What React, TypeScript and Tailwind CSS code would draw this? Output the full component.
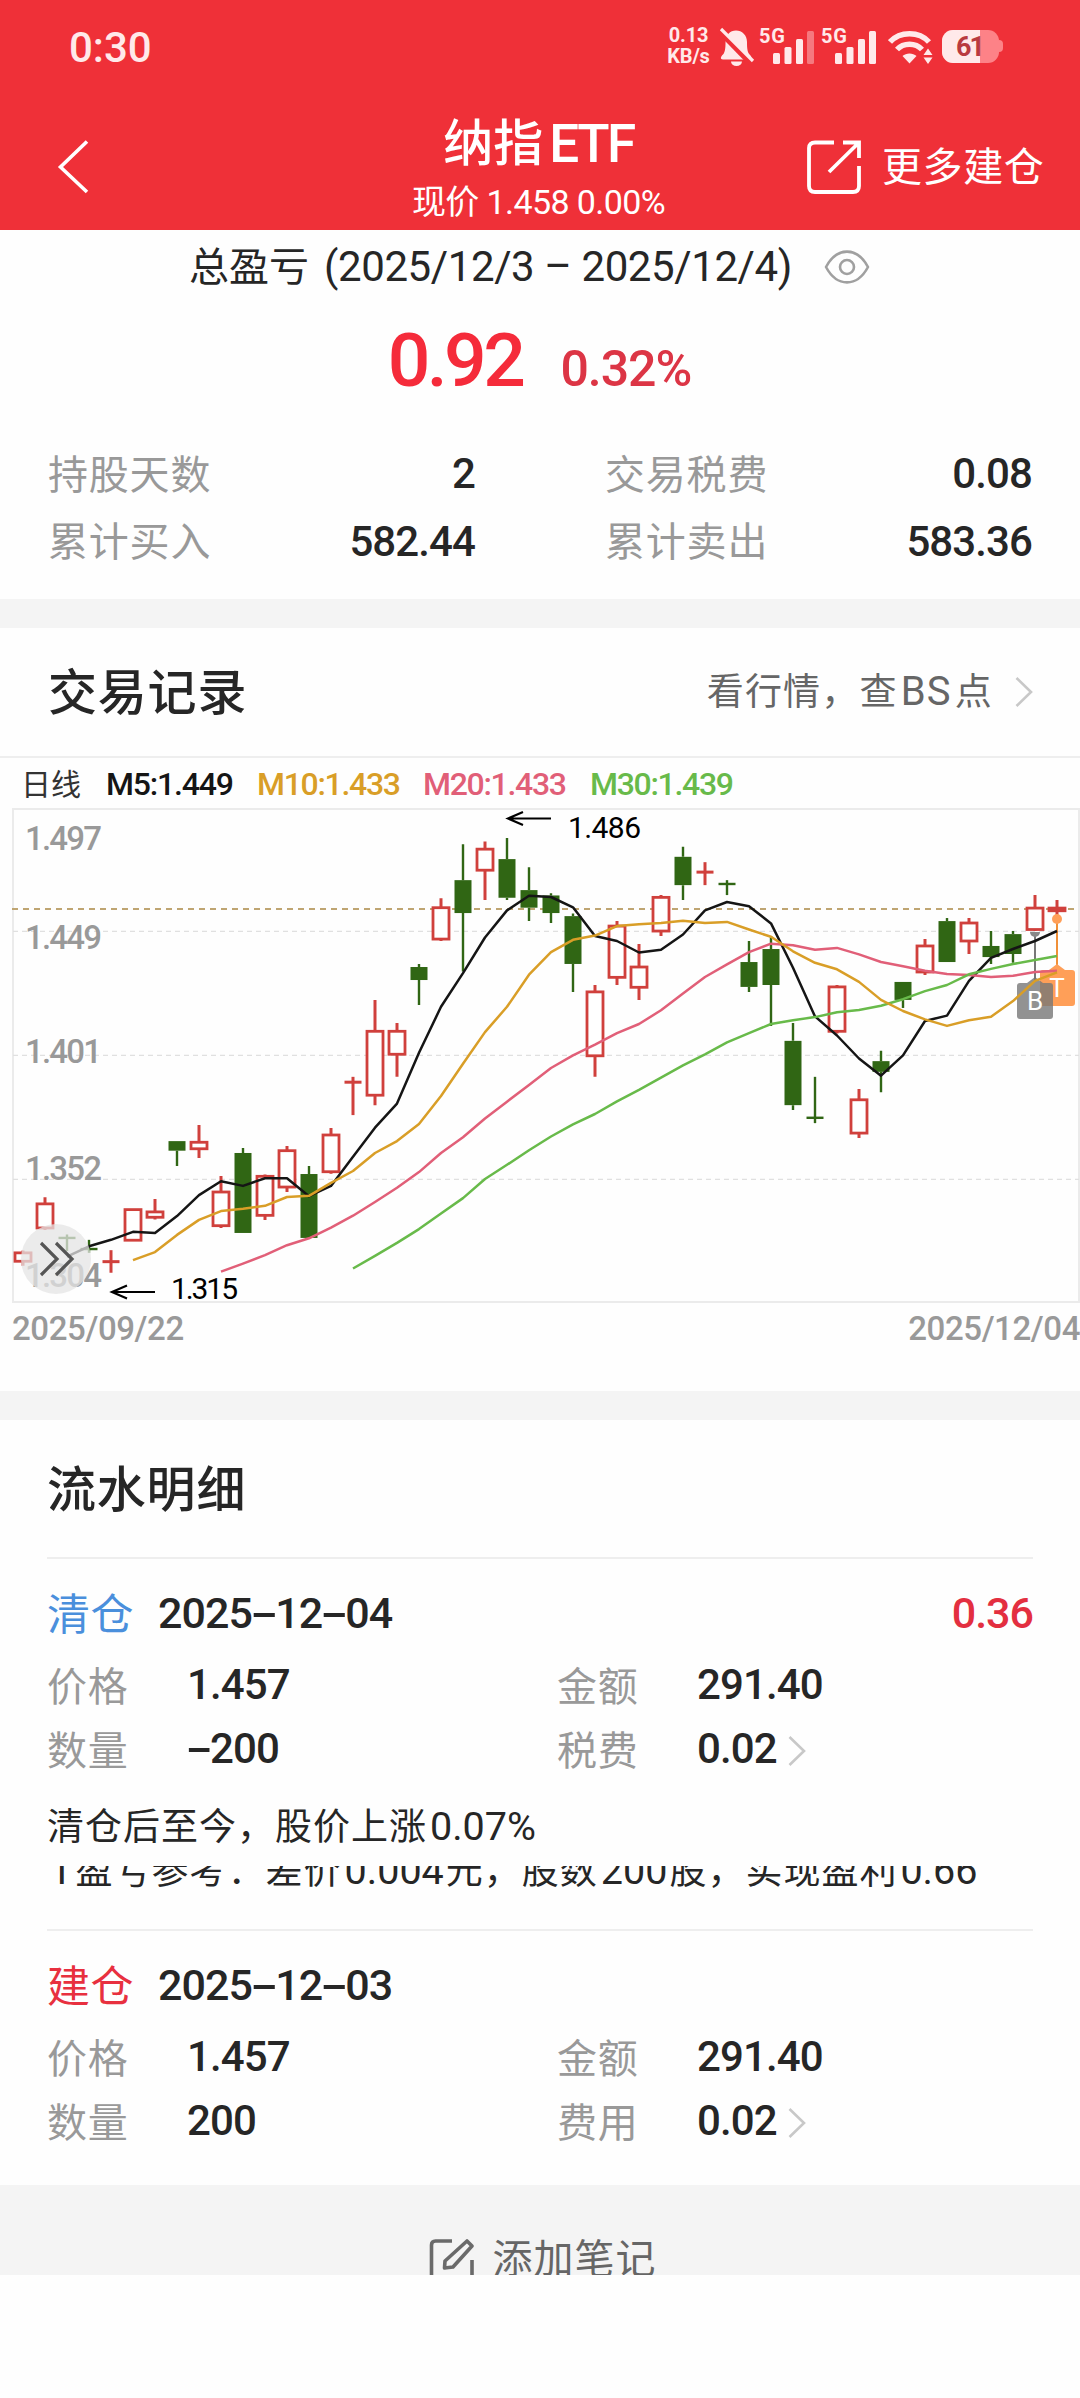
import React from 'react';

type Candle = [up: boolean, high: number, top: number, bottom: number, low: number];

const CHART_TOP = 48;
const CHART_UNIT = 0.38265;
const BLACK = '#151515';
const RED = '#d0403c';
const GREEN = '#306614';

const CANDLES: Candle[] = [
  [true, 1282, 1288, 1310, 1322],
  [true, 1143, 1160, 1223, 1228],
  [false, 1240, 1249, 1249, 1283],
  [false, 1254, 1278, 1278, 1288],
  [true, 1281, 1311, 1311, 1340],
  [true, 1175, 1175, 1255, 1255],
  [true, 1147, 1181, 1195, 1201],
  [false, 996, 996, 1021, 1061],
  [true, 954, 999, 1016, 1040],
  [true, 1087, 1129, 1217, 1223],
  [false, 1014, 1027, 1236, 1236],
  [true, 1083, 1088, 1190, 1202],
  [true, 1009, 1021, 1116, 1129],
  [false, 1061, 1082, 1249, 1249],
  [true, 962, 980, 1076, 1081],
  [true, 828, 842, 842, 928],
  [true, 627, 709, 876, 902],
  [true, 687, 709, 769, 828],
  [false, 533, 541, 575, 640],
  [true, 361, 386, 468, 473],
  [false, 220, 314, 400, 553],
  [true, 213, 233, 288, 366],
  [false, 204, 259, 360, 366],
  [false, 280, 340, 386, 421],
  [false, 348, 354, 400, 426],
  [false, 401, 408, 533, 606],
  [true, 588, 606, 773, 828],
  [true, 421, 434, 568, 588],
  [true, 481, 541, 594, 627],
  [true, 353, 359, 447, 460],
  [false, 227, 253, 327, 366],
  [true, 267, 293, 293, 327],
  [false, 314, 324, 324, 353],
  [false, 473, 528, 593, 606],
  [false, 460, 494, 588, 695],
  [false, 687, 734, 902, 915],
  [false, 828, 935, 935, 949],
  [true, 588, 593, 709, 715],
  [true, 860, 888, 975, 988],
  [false, 760, 787, 815, 868],
  [false, 580, 580, 627, 648],
  [true, 468, 486, 554, 562],
  [false, 413, 421, 528, 528],
  [true, 413, 426, 473, 507],
  [false, 447, 486, 515, 533],
  [false, 447, 455, 507, 530],
  [true, 353, 387, 443, 447],
  [true, 366, 387, 394, 413],
];

const M5 = [
  1298, 1271, 1254, 1233, 1236, 1192, 1137, 1101, 1113, 1093, 1093, 1140, 1113, 1037, 961, 898,
  765, 645, 557, 464, 393, 355, 358, 385, 460, 473, 503, 496, 456, 393, 371, 382, 427, 543, 670,
  720, 780, 825, 772, 682, 668, 577, 517, 494, 473, 447,
];
const M10 = [
  1307, 1286, 1241, 1202, 1179, 1173, 1165, 1142, 1139, 1105, 1074, 1027, 996, 951, 878, 794, 711,
  645, 561, 502, 470, 459, 434, 429, 426, 420, 426, 423, 443, 462, 500, 530, 547, 580, 627, 656,
  678, 695, 680, 671, 630, 577, 555,
];
const M20 = [
  1337, 1316, 1294, 1268, 1250, 1222, 1191, 1155, 1118, 1077, 1027, 986, 937, 893, 849, 805, 772,
  744, 714, 690, 654, 610, 567, 534, 502, 480, 484, 496, 491, 508, 528, 539, 551, 559, 562, 567,
  564, 554, 551,
];
const M30 = [
  1329, 1296, 1262, 1226, 1185, 1145, 1095, 1058, 1020, 984, 952, 925, 892, 862, 830, 798, 769,
  738, 714, 690, 680, 672, 659, 653, 642, 625, 604, 588, 560, 546, 533, 523, 512,
];

const AVERAGES = [
  { color: BLACK, values: M5 },
  { color: '#e15f78', values: M20 },
  { color: '#68ba4a', values: M30 },
  { color: '#d99e27', values: M10 },
];

const PRICE_LABELS: [string, number][] = [
  ['1.497', 42],
  ['1.449', 141],
  ['1.401', 255],
  ['1.352', 372],
  ['1.304', 479],
];

const px = (i: number) => 23 + i * 22;
const py = (v: number) => v * CHART_UNIT - CHART_TOP;

// averages are right-aligned: the last value always belongs to the last candle
const toPoints = (values: number[]) => {
  const start = CANDLES.length - values.length;
  return values.map((v, i) => `${px(start + i)},${py(v).toFixed(1)}`).join(' ');
};

const CandleBar = ({ candle, x }: { candle: Candle; x: number }) => {
  const [up, high, top, bottom, low] = candle;
  const color = up ? RED : GREEN;
  const wick = up ? 3 : 2.4;

  if (top === bottom) {
    return (
      <g stroke={color}>
        <path d={`M${x} ${py(high)}V${py(low)}`} strokeWidth={wick} />
        <path d={`M${x - 8.5} ${py(top)}H${x + 8.5}`} strokeWidth={wick} />
      </g>
    );
  }

  return (
    <g stroke={color}>
      <path d={`M${x} ${py(high)}V${py(top)}M${x} ${py(bottom)}V${py(low)}`} strokeWidth={wick} />
      {up ? (
        <rect x={x - 8} y={py(top)} width={16} height={py(bottom) - py(top)} fill="#fff" strokeWidth={2.8} />
      ) : (
        <rect x={x - 8.5} y={py(top)} width={17} height={py(bottom) - py(top)} fill={color} stroke="none" />
      )}
    </g>
  );
};

const KLineChart = () => (
  <svg width="1080" height="496" viewBox="0 0 1080 496" fill="none" className="block shrink-0 overflow-visible">
    <rect x="13" y="1" width="1066" height="493" stroke="#ebebeb" strokeWidth="2" />
    {[123.4, 247.4, 371.4].map(y => (
      <path key={y} d={`M13 ${y}H1079`} stroke="#e0e0e0" strokeWidth="1.2" strokeDasharray="5 4" />
    ))}
    <path d="M12 101H1075" stroke="#bfa572" strokeWidth="1.8" strokeDasharray="6 5" />

    <g fontSize="33" fontWeight="500" fill="#999">
      {PRICE_LABELS.map(([label, y]) => (
        <text key={label} x="25" y={y} textLength="77">{label}</text>
      ))}
    </g>

    {CANDLES.map((candle, i) => (
      <CandleBar key={i} candle={candle} x={px(i)} />
    ))}

    {/* T marker */}
    <g fill="#ff9f58">
      <path d="M1057 111V160" stroke="#f09038" strokeWidth="2" />
      <circle cx="1057" cy="111" r="5" />
      <path d="M1057 156l8 6h7a3 3 0 0 1 3 3v30a3 3 0 0 1-3 3h-29a3 3 0 0 1-3-3v-30a3 3 0 0 1 3-3h6z" />
    </g>
    {/* B marker */}
    <path d="M1035 124V172" stroke="#777" strokeWidth="2" />
    <path d="M1030 124a5 5 0 0 0 10 0z" fill="#888" />
    <path
      d="M1035 169l8 6h7a3 3 0 0 1 3 3v30a3 3 0 0 1-3 3h-30a3 3 0 0 1-3-3v-30a3 3 0 0 1 3-3h7z"
      fill="#777"
      fillOpacity="0.8"
    />

    {AVERAGES.map(({ color, values }) => (
      <polyline key={color} points={toPoints(values)} stroke={color} strokeWidth="2.5" strokeLinejoin="round" />
    ))}

    <g fontSize="26" fill="#fff" textAnchor="middle">
      <text x="1057" y="189">T</text>
      <text x="1035" y="202">B</text>
    </g>

    {/* highest / lowest price */}
    <g stroke="#000" strokeWidth="2.2">
      <path d="M551 10.5H508M523 4L508 10.5L523 17" />
      <path d="M155 484H112M127 477.5L112 484L127 490.5" />
    </g>
    <g fontSize="30" fill="#000">
      <text x="568" y="30" textLength="73">1.486</text>
      <text x="171" y="491" textLength="67">1.315</text>
    </g>

    <circle cx="56" cy="451" r="35" fill="#e4e4e4" fillOpacity="0.75" />
    <path d="M41 435L57 451L41 467M56 435L72 451L56 467" stroke="#555" strokeWidth="3.2" />
  </svg>
);

const Chevron = ({ className = '' }: { className?: string }) => (
  <svg width="20" height="32" viewBox="0 0 20 32" fill="none" className={className}>
    <path d="M2.5 2L17 16L2.5 30" stroke="#c8c8c8" strokeWidth="2.6" />
  </svg>
);

const Signal = ({ weak = false }: { weak?: boolean }) => (
  <svg width="56" height="40" viewBox="0 0 56 40" fill="#ffe9ea" className="overflow-visible">
    <text x="0" y="17" fontSize="20" fontWeight="700" textLength="26">5G</text>
    <rect x="14" y="27" width="7" height="11" rx="1.5" />
    <rect x="25.5" y="21" width="7" height="17" rx="1.5" />
    <rect x="37" y="13" width="7" height="25" rx="1.5" />
    <rect x="48" y="5" width="7" height="33" rx="1.5" fillOpacity={weak ? 0.4 : 1} />
  </svg>
);

const StatusBar = () => (
  <div className="flex h-[92px] items-center pl-[69px] text-[#ffe9ea]">
    <span className="w-[597px] pt-[3px] text-[42px] font-medium leading-none">0:30</span>
    <div className="w-[45px] text-center text-[20px] font-bold leading-[21px]">
      <div className="tracking-[-0.2px]">0.13</div>
      <div className="tracking-[-0.2px]">KB/s</div>
    </div>
    <svg width="36" height="40" viewBox="0 0 36 40" className="ml-[8px]">
      <path
        d="M4 33.5C1 33.5 1.500 30.5 4 28.500C6 26.500 6.500 22 6.500 17C6.500 9 11 4.500 17 4.500C23 4.500 28 9 28 16C28 23 28.500 26.500 31 29C33 31 33 33.500 30 33.500Z"
        fill="#ffe9ea"
      />
      <path d="M12 35.500h11a5.500 4.500 0 0 1-11 0z" fill="#ffe9ea" />
      <path d="M-2 3L31 37" stroke="#ef3038" strokeWidth="5" />
      <path d="M2 3L34 35" stroke="#ffe9ea" strokeWidth="3.2" />
    </svg>
    <div className="ml-[4px] flex gap-[6px]">
      <Signal weak />
      <Signal />
    </div>
    <svg width="46" height="40" viewBox="0 0 46 40" fill="none" className="ml-[11px]">
      <path d="M2 16C12 5 31 5 41 16" stroke="#ffe9ea" strokeWidth="5.500" />
      <path d="M9 23.500C15.500 16.500 27.500 16.500 34 23.500" stroke="#ffe9ea" strokeWidth="5.500" />
      <path d="M14.500 30C18 26.500 25 26.500 28.500 30L21.500 37.500z" fill="#ffe9ea" />
      <path d="M35.500 29L40 22.500L44.500 29zM35.500 31.500L40 38L44.500 31.500z" fill="#ffe9ea" />
    </svg>
    <div className="relative ml-[8px] h-[33px] w-[57px] overflow-hidden rounded-[11px] bg-[#fd8287]">
      <div className="h-full w-[38px] bg-[#ffe9ea]" />
      <span className="absolute left-[14px] top-0 text-[27px] font-bold leading-[34px] tracking-[-2px] text-[#b93a3f]">61</span>
    </div>
    <div className="h-[12px] w-[4px] rounded-r-full bg-[#fd8287]" />
  </div>
);

const Header = () => (
  <header className="h-[230px] bg-[#ef3038] text-white">
    <StatusBar />
    <div className="flex h-[138px] items-start">
      <svg width="34" height="56" viewBox="0 0 34 56" fill="none" className="ml-[56px] mt-[47px]">
        <path d="M31 2.500L4.500 28L31 53" stroke="#fff" strokeWidth="3.600" />
      </svg>
      <div className="ml-[262px] w-[378px] pr-[5px] text-center">
        <div className="mt-[24px] flex justify-center text-[50px] font-medium leading-[56px]">
          纳指<span className="ml-1.5 text-[53px] tracking-[-2.500px]">ETF</span>
        </div>
        <div className="mt-[10px] text-[34px] leading-[40px] tracking-[-0.6px]">
          现价 1.458 0.00%
        </div>
      </div>
      <svg width="54" height="54" viewBox="0 0 54 54" fill="none" className="ml-[77px] mt-[48px]">
        <path d="M27 2.500H8Q2 2.500 2 8V46Q2 52 8 52H46Q52 52 52 46V26" stroke="#fff" strokeWidth="3.800" />
        <path d="M36 2.500H52V18M51.500 3L22 32" stroke="#fff" strokeWidth="3.800" />
      </svg>
      <span className="ml-[21px] mt-[50px] whitespace-nowrap text-[40px] leading-[52px] tracking-[0.6px]">更多建仓</span>
    </div>
  </header>
);

const Stat = ({ label, value }: { label: string; value: string }) => (
  <div className="flex h-[67.500px] w-[427px] items-center justify-between">
    <span className="pt-[8px] text-[40px] leading-none tracking-[0.8px] text-[#999]">{label}</span>
    <span className="pt-[5px] text-[42px] font-medium leading-none tracking-[-0.9px]">{value}</span>
  </div>
);

const Summary = () => (
  <section className="h-[369px]">
    <div className="flex h-[74px] items-center pl-[189px]">
      <span className="whitespace-nowrap text-[40px] leading-none">
        总盈亏<span className="ml-[15px] text-[42px] tracking-[-0.400px]">(2025/12/3 – 2025/12/4)</span>
      </span>
      <svg width="46" height="36" viewBox="0 0 46 36" fill="none" className="ml-[32px]" stroke="#a0a0a0" strokeWidth="2.600">
        <path d="M2 18C13 -2.500 33 -2.500 44 18C33 38.500 13 38.500 2 18Z" strokeLinejoin="round" />
        <circle cx="23" cy="18" r="7" />
      </svg>
    </div>
    <div className="mt-[14px] flex h-[84px] items-baseline justify-center pr-[1px] text-[#f52b3a]">
      <span className="text-[75px] font-medium leading-[84px] tracking-[-3.500px]">0.92</span>
      <span className="ml-[38px] text-[50px] leading-none font-medium tracking-[-1px] text-[#dc3545]">0.32%</span>
    </div>
    <div className="mt-[36px] flex flex-wrap justify-between pl-[48px] pr-[48px]">
      <Stat label="持股天数" value="2" />
      <Stat label="交易税费" value="0.08" />
      <Stat label="累计买入" value="582.44" />
      <Stat label="累计卖出" value="583.36" />
    </div>
  </section>
);

const Records = () => (
  <section className="h-[763px]">
    <div className="flex h-[128px] items-center justify-between pl-[48px] pr-[46px]">
      <h2 className="pt-[3px] text-[49px] font-medium leading-none tracking-[0.8px]">交易记录</h2>
      <div className="flex items-center text-[#666]">
        <span className="text-[37px] leading-none tracking-[1.200px]">
          看行情，查<span className="mx-[3px] text-[40px]">BS</span>点
        </span>
        <Chevron className="ml-[21px]" />
      </div>
    </div>
    <div className="flex h-[52px] items-center border-t-2 border-[#eee] pl-[21px] pt-[2px] text-[32px] font-medium">
      <span className="w-[85px] text-[30px] font-normal text-[#333]">日线</span>
      <span className="w-[151px] tracking-[-1.200px] text-[#151515]">M5:1.449</span>
      <span className="w-[166px] tracking-[-1.300px] text-[#d99e27]">M10:1.433</span>
      <span className="w-[167px] tracking-[-1.300px] text-[#e15f78]">M20:1.433</span>
      <span className="tracking-[-1.300px] text-[#68ba4a]">M30:1.439</span>
    </div>
    <KLineChart />
    <div className="flex h-[50px] items-center justify-between pl-[12px] text-[33px] font-medium text-[#999]">
      <span className="tracking-[-0.400px]">2025/09/22</span>
      <span className="tracking-[-0.400px]">2025/12/04</span>
    </div>
  </section>
);

// digits stay narrow while the dash is drawn as wide as a numeral
const Dashed = ({ text }: { text: string }) => (
  <>
    {text.split(/(-)/).map((part, i) =>
      part === '-' ? (
        <span key={i} className="inline-block w-[23px] origin-center scale-x-[1.900] text-center">-</span>
      ) : (
        part
      )
    )}
  </>
);

// latin runs inside Chinese sentences are a bit larger and get some air
const Mixed = ({ text }: { text: string }) => (
  <>
    {text.split(/([\w.%]+)/).map((part, i) =>
      i % 2 === 1 ? (
        <span key={i} className="ml-[3px] mr-[2px] text-[39.500px] tracking-[0px]">{part}</span>
      ) : (
        part
      )
    )}
  </>
);

interface TradeProps {
  kind: string;
  kindClass: string;
  date: string;
  profit?: string;
  quantity: string;
  feeLabel: string;
}

const Field = ({ label, value, arrow = false }: { label: string; value: string; arrow?: boolean }) => (
  <div className="flex h-[64px] w-[510px] items-center">
    <span className="w-[140px] pt-[5px] text-[40px] leading-none tracking-[0.8px] text-[#999]">{label}</span>
    <span className="text-[42px] font-medium leading-none tracking-[-0.9px]"><Dashed text={value} /></span>
    {arrow && <Chevron className="ml-[10px] mt-[3px]" />}
  </div>
);

const Trade = ({ kind, kindClass, date, profit, quantity, feeLabel }: TradeProps) => (
  <div className="border-t-2 border-[#eee] pt-[16px]">
    <div className="flex h-[76px] items-center text-[43px] font-medium leading-none">
      <span className={`w-[111px] pt-[5px] font-normal tracking-[0.500px] ${kindClass}`}>{kind}</span>
      <span className="tracking-[-0.9px]"><Dashed text={date} /></span>
      {profit && <span className="ml-auto tracking-[-1px] text-[#e32f40]">{profit}</span>}
    </div>
    <div className="mt-[2px] flex flex-wrap">
      <Field label="价格" value="1.457" />
      <div className="w-[476px]"><Field label="金额" value="291.40" /></div>
      <Field label="数量" value={quantity} />
      <div className="w-[476px]"><Field label={feeLabel} value="0.02" arrow /></div>
    </div>
  </div>
);

const Details = () => (
  <section className="h-[765px] px-[47px]">
    <h2 className="flex h-[137px] items-center pt-[4px] text-[49px] font-medium leading-none tracking-[0.8px]">流水明细</h2>
    <div className="h-[372px]">
      <Trade
        kind="清仓"
        kindClass="text-[#4a8fdc]"
        date="2025-12-04"
        profit="0.36"
        quantity="-200"
        feeLabel="税费"
      />
      <div className="mt-[2px] h-[83px] whitespace-nowrap pt-[21px] text-[37px] leading-[46px] tracking-[1px]">
        <Mixed text="清仓后至今，股价上涨0.07%" />
      </div>
      <div className="flex h-[30px] items-end overflow-hidden whitespace-nowrap text-[37px] leading-[46px] tracking-[1px]">
        <span className="mb-[1px]"><Mixed text="T盈亏参考：差价0.004元，股数200股，实现盈利0.66" /></span>
      </div>
    </div>
    <Trade kind="建仓" kindClass="text-[#e8303f]" date="2025-12-03" quantity="200" feeLabel="费用" />
  </section>
);

const NoteBar = () => (
  <div className="flex h-[90px] items-start justify-center overflow-hidden bg-[#f4f4f4] pl-[4px] pt-[51px] text-[#666]">
    <svg width="46" height="50" viewBox="0 0 46 50" fill="none" stroke="#6a6a6a" strokeWidth="3.600">
      <path d="M24 5H7.500Q3.500 5 3.500 9V49H44V24" />
      <path d="M39 5L44 10L25 31L16.500 32L17 25Z" strokeLinejoin="round" />
    </svg>
    <span className="ml-[19px] text-[40px] leading-[48px] tracking-[1px]">添加笔记</span>
  </div>
);

const App: React.FC = () => {
  return (
    <div className="h-[2398px] w-[1080px] overflow-hidden bg-[#fefefe] font-[Roboto,'Noto_Sans_CJK_SC',sans-serif] text-[#262626]">
      <Header />
      <Summary />
      <div className="h-[29px] bg-[#f4f4f4]" />
      <Records />
      <div className="h-[29px] bg-[#f4f4f4]" />
      <Details />
      <NoteBar />
    </div>
  );
};

export default App;
